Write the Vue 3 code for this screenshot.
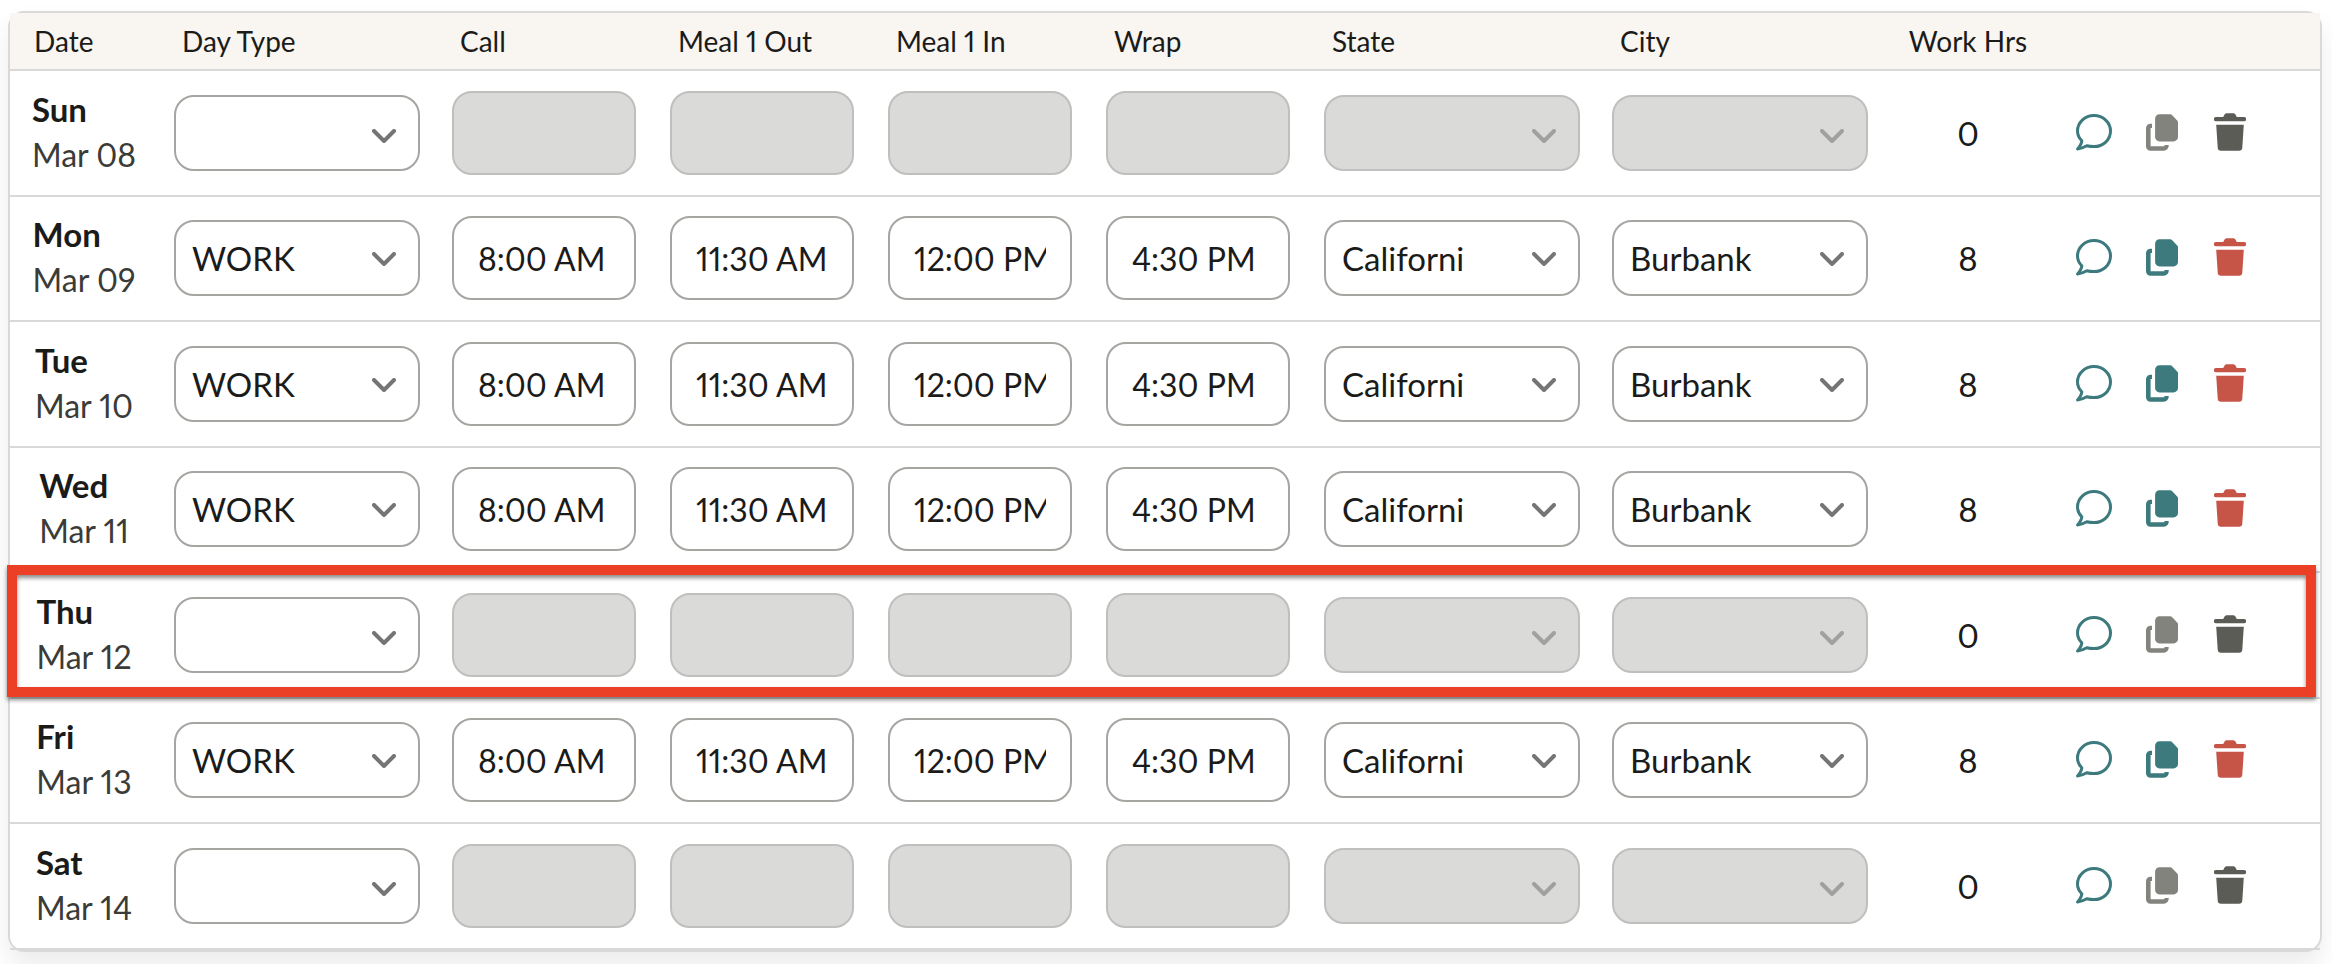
<script setup>
import { reactive } from 'vue'

const timeFields = [
  { key: 'call', label: 'Call' },
  { key: 'mealOut', label: 'Meal 1 Out' },
  { key: 'mealIn', label: 'Meal 1 In' },
  { key: 'wrap', label: 'Wrap' }
]

const placeFields = [
  { key: 'state', label: 'State' },
  { key: 'city', label: 'City' }
]

const workDay = (day, date) => ({
  day,
  date,
  type: 'WORK',
  call: '8:00 AM',
  mealOut: '11:30 AM',
  mealIn: '12:00 PM',
  wrap: '4:30 PM',
  state: 'Californi',
  city: 'Burbank',
  hours: 8
})

const emptyDay = (day, date, marked = false) => ({
  day,
  date,
  marked,
  type: '',
  call: '',
  mealOut: '',
  mealIn: '',
  wrap: '',
  state: '',
  city: '',
  hours: 0
})

const rows = reactive([
  emptyDay('Sun', 'Mar 08'),
  workDay('Mon', 'Mar 09'),
  workDay('Tue', 'Mar 10'),
  workDay('Wed', 'Mar 11'),
  emptyDay('Thu', 'Mar 12', true),
  workDay('Fri', 'Mar 13'),
  emptyDay('Sat', 'Mar 14')
])
</script>

<template>
  <main class="page">
    <div class="card">
      <table class="timecard">
        <colgroup>
          <col class="col-date" />
          <col class="col-type" />
          <col v-for="f in timeFields" :key="f.key" class="col-time" />
          <col v-for="f in placeFields" :key="f.key" class="col-place" />
          <col class="col-hours" />
          <col class="col-actions" />
        </colgroup>
        <thead>
          <tr>
            <th scope="col">Date</th>
            <th scope="col">Day Type</th>
            <th v-for="f in timeFields" :key="f.key" scope="col">{{ f.label }}</th>
            <th v-for="f in placeFields" :key="f.key" scope="col">{{ f.label }}</th>
            <th scope="col" class="center">Work Hrs</th>
            <th></th>
          </tr>
        </thead>
        <tbody>
          <tr v-for="row in rows" :key="row.date" :class="{ empty: !row.type }">
            <td class="date-cell">
              <div class="date">
                <strong>{{ row.day }}</strong>
                <span>{{ row.date }}</span>
              </div>
              <div v-if="row.marked" class="marker"></div>
            </td>
            <td>
              <div class="dropdown">
                <select v-model="row.type" :aria-label="`Day type, ${row.date}`">
                  <option value=""></option>
                  <option value="WORK">WORK</option>
                </select>
                <svg class="chevron" viewBox="0 0 24 14" aria-hidden="true">
                  <path d="M2 2 12 12 22 2" />
                </svg>
              </div>
            </td>
            <td v-for="f in timeFields" :key="f.key" class="time-cell">
              <input
                v-model="row[f.key]"
                type="text"
                :disabled="!row.type"
                :aria-label="`${f.label}, ${row.date}`"
              />
            </td>
            <td v-for="f in placeFields" :key="f.key">
              <div class="dropdown">
                <select
                  v-model="row[f.key]"
                  :disabled="!row.type"
                  :aria-label="`${f.label}, ${row.date}`"
                >
                  <option :value="row[f.key]">{{ row[f.key] }}</option>
                </select>
                <svg class="chevron" viewBox="0 0 24 14" aria-hidden="true">
                  <path d="M2 2 12 12 22 2" />
                </svg>
              </div>
            </td>
            <td class="hours">{{ row.hours }}</td>
            <td>
              <div class="actions">
                <button type="button" class="comment" :aria-label="`Comment on ${row.date}`">
                  <svg width="36" height="37" viewBox="0 0 36 37" aria-hidden="true">
                    <path
                      d="M5.8 26.8C5.6 29.8 3.8 32.4 1.6 35C5.4 34.8 8 33.4 10.8 31.8C13.2 32.4 15.6 32.6 18 32.6C27.2 32.6 34.5 25.7 34.5 17C34.5 8.4 27.2 1.6 18 1.6C8.8 1.6 1.5 8.4 1.5 17C1.5 20.8 3 24 5.8 26.8Z"
                    />
                  </svg>
                </button>
                <button type="button" class="copy" :disabled="!row.type" :aria-label="`Copy ${row.date}`">
                  <svg width="32" height="37" viewBox="0 0 32 37" aria-hidden="true">
                    <path
                      d="M13.5 0.3H24.2Q25.2 0.3 26 1.1L31.2 6.6Q32 7.4 32 8.4V23A4.4 4.4 0 0 1 27.6 27.4H13.5A4.4 4.4 0 0 1 9.1 23V4.7A4.4 4.4 0 0 1 13.5 0.3Z"
                    />
                    <path
                      d="M6 9.7H4.5A4.5 4.5 0 0 0 0 14.2V32.2A4.5 4.5 0 0 0 4.5 36.7H17.6A5 5 0 0 0 22.7 31H18.4V32.3H4.6V14H6Z"
                    />
                  </svg>
                </button>
                <button type="button" class="trash" :disabled="!row.type" :aria-label="`Delete ${row.date}`">
                  <svg width="32" height="38" viewBox="0 0 32 38" aria-hidden="true">
                    <path
                      d="M2 4H8.6Q9.6 4 9.9 2.8Q10.6 0.2 12.4 0.2H19.6Q21.4 0.2 22.1 2.8Q22.4 4 23.4 4H30A2 2 0 0 1 30 8.3H2A2 2 0 0 1 2 4Z"
                    />
                    <path
                      d="M2.2 11.7H29.8L28.3 34.6Q28.1 37.8 25 37.8H7Q3.9 37.8 3.7 34.6Z"
                    />
                  </svg>
                </button>
              </div>
            </td>
          </tr>
        </tbody>
      </table>
    </div>
  </main>
</template>

<style>
body {
  background: #fff;
}
</style>

<style scoped>
.page {
  box-sizing: border-box;
  padding: 11px 10px 12px 8px;
  overflow: hidden;
  font-family: Lato, 'Open Sans', sans-serif;
  font-variant-numeric: proportional-nums;
  color: #1b1b19;
}

.card {
  border: 2px solid #d9d9d9;
  border-radius: 16px;
  background: #fff;
  box-shadow: 0 14px 26px rgba(0, 0, 0, 0.08);
}

.timecard {
  width: 100%;
  table-layout: fixed;
  border-collapse: separate;
  border-spacing: 0;
}

.col-date {
  width: 148px;
}
.col-type {
  width: 278px;
}
.col-time {
  width: 218px;
}
.col-place {
  width: 288px;
}
.col-hours {
  width: 168px;
}
.col-actions {
  width: 268px;
}

th {
  box-sizing: border-box;
  height: 58px;
  padding: 0 0 0 24px;
  border-bottom: 2px solid #d9d9d9;
  background: #f9f5f0;
  font-size: 28px;
  line-height: 36px;
  font-weight: 400;
  text-align: left;
  white-space: nowrap;
}

th.center {
  padding: 0;
  text-align: center;
}

tbody tr {
  position: relative;
}

td {
  box-sizing: border-box;
  height: 125px;
  padding: 0 16px 1px;
  border-bottom: 2px solid #d9d9d9;
  font-size: 32px;
  vertical-align: middle;
}

tr:nth-child(odd) td {
  height: 126px;
  padding-bottom: 0;
}

td.time-cell {
  padding-right: 18px;
}

td.date-cell {
  padding-right: 0;
  padding-left: 0;
}

.date {
  display: flex;
  flex-direction: column;
  width: max-content;
  margin: 0 auto;
  padding-bottom: 2px;
  line-height: 46px;
}

.date strong {
  font-size: 33px;
  font-weight: 700;
}

.date span {
  color: #3b3b38;
}

.marker {
  position: absolute;
  top: -8px;
  right: 4px;
  bottom: 2px;
  left: -3px;
  border: 10px solid #eb4026;
  filter: drop-shadow(0 3px 2px rgba(0, 0, 0, 0.45));
  pointer-events: none;
}

input,
select {
  display: block;
  box-sizing: border-box;
  width: 100%;
  margin: 0;
  border: 2px solid #a5a5a1;
  border-radius: 20px;
  background: #fff;
  color: inherit;
  font: inherit;
  font-variant-numeric: inherit;
  opacity: 1;
}

input {
  height: 84px;
  padding: 0 24px;
}

select {
  height: 76px;
  padding: 0 60px 0 16px;
  font-size: 33px;
  appearance: none;
}

input:disabled,
select:disabled {
  border-color: #bfbfbd;
  background: #dadad8;
}

.dropdown {
  display: grid;
  align-items: center;
}

.dropdown > * {
  grid-area: 1 / 1;
}

.chevron {
  justify-self: end;
  width: 24px;
  height: 14px;
  margin: 2px 24px 0 0;
  fill: none;
  stroke: #757575;
  stroke-width: 4;
  stroke-linecap: round;
  stroke-linejoin: round;
  pointer-events: none;
}

.empty .chevron {
  margin-top: 6px;
}

select:disabled + .chevron {
  stroke: #a0a09f;
}

td.hours {
  padding-right: 0;
  padding-left: 0;
  font-size: 33px;
  text-align: center;
}

.actions {
  display: flex;
  align-items: center;
  gap: 32px;
  padding: 0 0 2px 8px;
}

button {
  display: flex;
  align-items: center;
  justify-content: center;
  width: 36px;
  height: 38px;
  padding: 0;
  border: 0;
  background: none;
  color: #3d7a7d;
  fill: currentColor;
}

button svg {
  flex: none;
}

.comment svg {
  fill: none;
  stroke: currentColor;
  stroke-width: 3;
  stroke-linejoin: round;
}

.copy:disabled {
  color: #83837d;
}

.trash {
  color: #c65548;
}

.trash:disabled {
  color: #5c5c56;
}
</style>
